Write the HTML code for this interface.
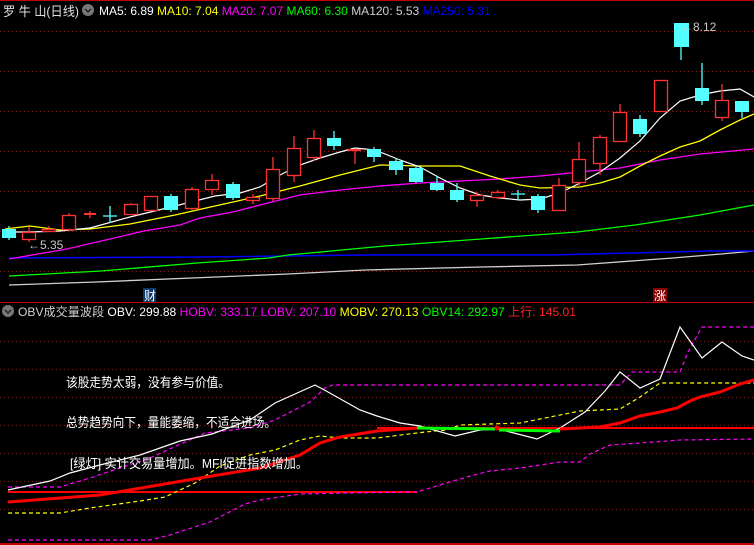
<!DOCTYPE html>
<html><head><meta charset="utf-8"><style>
html,body{margin:0;padding:0;background:#000;width:754px;height:545px;overflow:hidden}
svg{display:block}
text{font-family:"Liberation Sans","Noto Sans CJK SC",sans-serif}
</style></head><body>
<svg width="754" height="545" viewBox="0 0 754 545" xmlns="http://www.w3.org/2000/svg">
<rect width="754" height="545" fill="#000"/>
<line x1="0" y1="0.5" x2="754" y2="0.5" stroke="#c00000"/>
<g stroke="#8a1a1a" stroke-dasharray="1,3">
<line x1="0" y1="31.5" x2="754" y2="31.5"/><line x1="0" y1="71.5" x2="754" y2="71.5"/>
<line x1="0" y1="111.5" x2="754" y2="111.5"/><line x1="0" y1="151.5" x2="754" y2="151.5"/>
<line x1="0" y1="191.5" x2="754" y2="191.5"/><line x1="0" y1="231.5" x2="754" y2="231.5"/>
<line x1="0" y1="271.5" x2="754" y2="271.5"/>
<line x1="0" y1="341.5" x2="754" y2="341.5"/><line x1="0" y1="369.5" x2="754" y2="369.5"/>
<line x1="0" y1="397.5" x2="754" y2="397.5"/><line x1="0" y1="425.5" x2="754" y2="425.5"/>
<line x1="0" y1="453.5" x2="754" y2="453.5"/><line x1="0" y1="481.5" x2="754" y2="481.5"/>
<line x1="0" y1="509.5" x2="754" y2="509.5"/>
</g>
<line x1="0" y1="302.5" x2="754" y2="302.5" stroke="#c00000"/>
<line x1="0" y1="544" x2="754" y2="544" stroke="#c00000" stroke-width="2"/>

<!-- header -->
<text x="3" y="16" fill="#e0e0e0" font-size="13" textLength="76" lengthAdjust="spacingAndGlyphs">罗 牛 山(日线)</text>
<circle cx="88" cy="10" r="6" fill="#777"/><path d="M85,9 l3,3 l3,-3" stroke="#222" stroke-width="1.5" fill="none"/>
<text x="99" y="15" font-size="12" fill="#fff">MA5: 6.89 <tspan fill="#ffff00">MA10: 7.04</tspan> <tspan fill="#ff00ff">MA20: 7.07</tspan> <tspan fill="#00ff00">MA60: 6.30</tspan> <tspan fill="#d0d0d0">MA120: 5.53</tspan> <tspan fill="#0000ff">MA250: 5.31</tspan></text>

<!-- MA lines -->
<polyline fill="none" stroke="#d0d0d0" stroke-width="1.3" points="9,285 96,282 192,278 288,274 365,270 481,267 577,265 673,258 721,254 754,251"/>
<polyline fill="none" stroke="#0000ff" stroke-width="1.5" points="9,258 202,257 284,256 365,255 548,255 630,253 712,251 754,251"/>
<polyline fill="none" stroke="#00ff00" stroke-width="1.3" points="9,276 101,271 197,263 269,258 288,255 385,246 481,239 577,232 635,225 700,215 754,205"/>
<polyline fill="none" stroke="#ff00ff" stroke-width="1.3" points="9,259 67,249 144,231 180,225 200,218 233,212 260,205 300,195 340,190 380,186 420,183 460,181 500,179 540,176 580,172 620,168 660,160 700,154 754,149"/>
<polyline fill="none" stroke="#ffff00" stroke-width="1.3" points="5,229 30,226 60,230 90,229 130,224 175,215 215,206 260,196 300,186 340,175 380,165 420,166 460,166 490,176 520,185 540,188 580,187 600,183 620,177 640,166 660,156 680,147 700,141 720,130 740,120 754,114"/>
<polyline fill="none" stroke="#ffffff" stroke-width="1.2" points="8,232 30,232 60,231 90,228 130,217 175,206 215,196 240,193 260,187 280,175 300,165 320,158 340,152 355,148 375,150 400,160 420,167 440,178 460,188 480,195 500,198 520,200 540,199 560,193 580,183 600,172 620,158 640,141 660,118 680,101 700,95 720,91 740,89 754,97"/>

<!-- candles -->
<g stroke="#ff3232" stroke-width="1.3" fill="#000">
<line x1="29" y1="227" x2="29" y2="242"/><rect x="22.5" y="232.5" width="13" height="7"/>
<line x1="49" y1="226" x2="49" y2="232"/><rect x="42.5" y="229.5" width="13" height="2"/>
<line x1="69" y1="213" x2="69" y2="231"/><rect x="62.5" y="215.5" width="13" height="14"/>
<line x1="90" y1="211" x2="90" y2="218"/><line x1="84" y1="214" x2="96" y2="214" stroke-width="2"/>
<line x1="131" y1="203" x2="131" y2="215"/><rect x="124.5" y="204.5" width="13" height="10"/>
<line x1="151" y1="196" x2="151" y2="211"/><rect x="144.5" y="196.5" width="13" height="14"/>
<line x1="192" y1="187" x2="192" y2="210"/><rect x="185.5" y="189.5" width="13" height="19"/>
<line x1="212" y1="174" x2="212" y2="195"/><rect x="205.5" y="180.5" width="13" height="9"/>
<line x1="253" y1="194" x2="253" y2="204"/><rect x="246.5" y="197.5" width="13" height="3"/>
<line x1="273" y1="157" x2="273" y2="201"/><rect x="266.5" y="169.5" width="13" height="29"/>
<line x1="294" y1="136" x2="294" y2="182"/><rect x="287.5" y="148.5" width="13" height="27"/>
<line x1="314" y1="130" x2="314" y2="161"/><rect x="307.5" y="138.5" width="13" height="19"/>
<line x1="355" y1="149" x2="355" y2="164"/><line x1="348" y1="150" x2="361" y2="150" stroke-width="2"/>
<line x1="477" y1="192" x2="477" y2="207"/><rect x="470.5" y="195.5" width="13" height="5"/>
<line x1="498" y1="190" x2="498" y2="199"/><rect x="491.5" y="192.5" width="13" height="5"/>
<line x1="559" y1="178" x2="559" y2="211"/><rect x="552.5" y="185.5" width="13" height="25"/>
<line x1="579" y1="142" x2="579" y2="186"/><rect x="572.5" y="159.5" width="13" height="23"/>
<line x1="600" y1="135" x2="600" y2="175"/><rect x="593.5" y="137.5" width="13" height="26"/>
<line x1="620" y1="104" x2="620" y2="142"/><rect x="613.5" y="112.5" width="13" height="29"/>
<rect x="654.5" y="80.5" width="13" height="31"/>
<line x1="722" y1="84" x2="722" y2="121"/><rect x="715.5" y="100.5" width="13" height="17"/>
</g>
<g fill="#54ffff" stroke="#54ffff" stroke-width="1.3">
<line x1="9" y1="226" x2="9" y2="240"/><rect x="2" y="229" width="14" height="9" stroke="none"/>
<line x1="110" y1="206" x2="110" y2="223"/><line x1="103" y1="216" x2="117" y2="216"/>
<line x1="171" y1="194" x2="171" y2="212"/><rect x="164" y="196" width="14" height="14" stroke="none"/>
<line x1="233" y1="182" x2="233" y2="200"/><rect x="226" y="184" width="14" height="14" stroke="none"/>
<line x1="334" y1="131" x2="334" y2="150"/><rect x="327" y="138" width="14" height="8" stroke="none"/>
<line x1="374" y1="147" x2="374" y2="162"/><rect x="367" y="149" width="14" height="8" stroke="none"/>
<line x1="396" y1="158" x2="396" y2="175"/><rect x="389" y="161" width="14" height="9" stroke="none"/>
<line x1="416" y1="166" x2="416" y2="183"/><rect x="409" y="168" width="14" height="14" stroke="none"/>
<line x1="437" y1="176" x2="437" y2="191"/><rect x="430" y="183" width="14" height="7" stroke="none"/>
<line x1="457" y1="183" x2="457" y2="202"/><rect x="450" y="190" width="14" height="10" stroke="none"/>
<line x1="518" y1="190" x2="518" y2="200"/><line x1="511" y1="194" x2="525" y2="194"/>
<line x1="538" y1="194" x2="538" y2="213"/><rect x="531" y="196" width="14" height="14" stroke="none"/>
<line x1="640" y1="115" x2="640" y2="137"/><rect x="633" y="119" width="14" height="15" stroke="none"/>
<line x1="681" y1="23" x2="681" y2="60"/><rect x="674" y="23" width="15" height="24" stroke="none"/>
<line x1="702" y1="63" x2="702" y2="105"/><rect x="695" y="88" width="14" height="13" stroke="none"/>
<line x1="742" y1="101" x2="742" y2="118"/><rect x="735" y="101" width="14" height="11" stroke="none"/>
</g>
<text x="28" y="249" fill="#c8c8c8" font-size="12">←5.35</text>
<text x="681" y="31" fill="#c8c8c8" font-size="12">←8.12</text>
<rect x="143" y="288" width="13" height="14" fill="#0d3a6b"/><text x="144" y="300" fill="#fff" font-size="12">财</text>
<rect x="653" y="288" width="14" height="14" fill="#8a0000"/><text x="654" y="300" fill="#fff" font-size="12">涨</text>

<!-- lower header -->
<circle cx="8" cy="311" r="6" fill="#777"/><path d="M5,310 l3,3 l3,-3" stroke="#222" stroke-width="1.5" fill="none"/>
<text x="18" y="316" font-size="12" fill="#d0d0d0" textLength="558" lengthAdjust="spacingAndGlyphs">OBV成交量波段 <tspan fill="#fff">OBV: 299.88</tspan> <tspan fill="#ff00ff">HOBV: 333.17</tspan> <tspan fill="#ff00ff">LOBV: 207.10</tspan> <tspan fill="#ffff00">MOBV: 270.13</tspan> <tspan fill="#00ff00">OBV14: 292.97</tspan> <tspan fill="#ff2020">上行: 145.01</tspan></text>

<!-- lower panel -->
<line x1="8" y1="492" x2="417" y2="492" stroke="#ff0000" stroke-width="2"/>
<line x1="377" y1="428" x2="754" y2="428" stroke="#ff0000" stroke-width="2"/>
<g fill="none" stroke-width="1.2" stroke-dasharray="4,3">
<polyline stroke="#ff00ff" points="8,487 60,487 90,478 150,458 205,433 250,428 275,420 310,402 325,388 333,385 620,385 632,372 680,372 688,352 702,327 754,327"/>
<polyline stroke="#ff00ff" points="8,540 150,540 170,535 210,522 245,504 260,500 300,494 345,493 417,492 440,485 470,476 490,471 520,468 560,462 580,462 590,454 610,445 640,443 680,440 754,439"/>
<polyline stroke="#ffff00" points="8,513 60,513 90,508 140,501 165,497 195,483 220,466 250,455 275,450 300,440 320,436 340,438 377,438 425,432 447,430 460,425 520,423 540,419 580,411 620,409 640,397 660,383 700,383 754,383"/>
</g>
<polyline fill="none" stroke="#ffffff" stroke-width="1.2" points="8,490 50,481 70,473 100,465 140,455 180,441 212,434 250,420 275,403 315,385 328,392 360,410 377,416 400,423 420,426 455,436 480,430 497,429 510,432 537,439 560,428 585,412 605,391 620,372 640,388 660,379 680,327 702,358 722,342 742,356 754,360"/>
<polyline fill="none" stroke="#ff0000" stroke-width="3" points="8,502 100,495 200,478 260,468 300,455 320,443 340,437 377,431 417,428"/>
<polyline fill="none" stroke="#00ff00" stroke-width="3" points="417,428 495,429"/>
<polyline fill="none" stroke="#00ff00" stroke-width="3" points="499,430 560,431"/>
<circle cx="497" cy="428" r="2.5" fill="#ff0000"/>
<polyline fill="none" stroke="#ff0000" stroke-width="3" points="560,429 600,427 620,423 640,416 660,412 677,408 690,401 700,397 720,392 740,384 754,380"/>
<g font-size="13" fill="#fff">
<text x="66" y="387" textLength="164" lengthAdjust="spacingAndGlyphs">该股走势太弱，没有参与价值。</text>
<text x="66" y="427" textLength="210" lengthAdjust="spacingAndGlyphs">总势趋势向下，量能萎缩，不适合进场。</text>
<text x="70" y="468" textLength="238" lengthAdjust="spacingAndGlyphs">[绿灯] 实计交易量增加。MFI促进指数增加。</text>
</g>
</svg>
</body></html>
